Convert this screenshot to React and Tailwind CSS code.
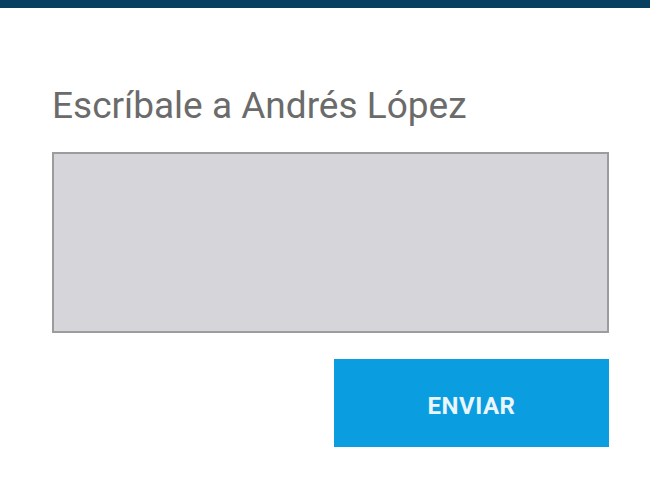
import React from "react";

const App = () => {
  return (
    <div className="w-[650px] h-[487px] bg-white overflow-hidden" style={{ fontFamily: "Roboto, sans-serif" }}>
      <div className="h-[8px] bg-[#063f60]" />
      <div className="pl-[52px] pr-[41px] pt-[76px]">
        <h2 className="text-[37px] leading-[44px] text-[#6b6b6b] font-normal">
          Escríbale a Andrés López
        </h2>
        <textarea
          className="block mt-[24px] w-[557px] h-[181px] bg-[#d6d6da] border-2 border-[#9c9c9e] resize-none outline-none"
          aria-label="Mensaje"
        />
        <div className="flex justify-end mt-[26px]">
          <button
            type="button"
            className="w-[275px] h-[88px] pt-[5px] bg-[#0a9de0] text-[#eaf6fc] text-[24px] font-bold tracking-[0.5px]"
          >
            ENVIAR
          </button>
        </div>
      </div>
    </div>
  );
};

export default App;
